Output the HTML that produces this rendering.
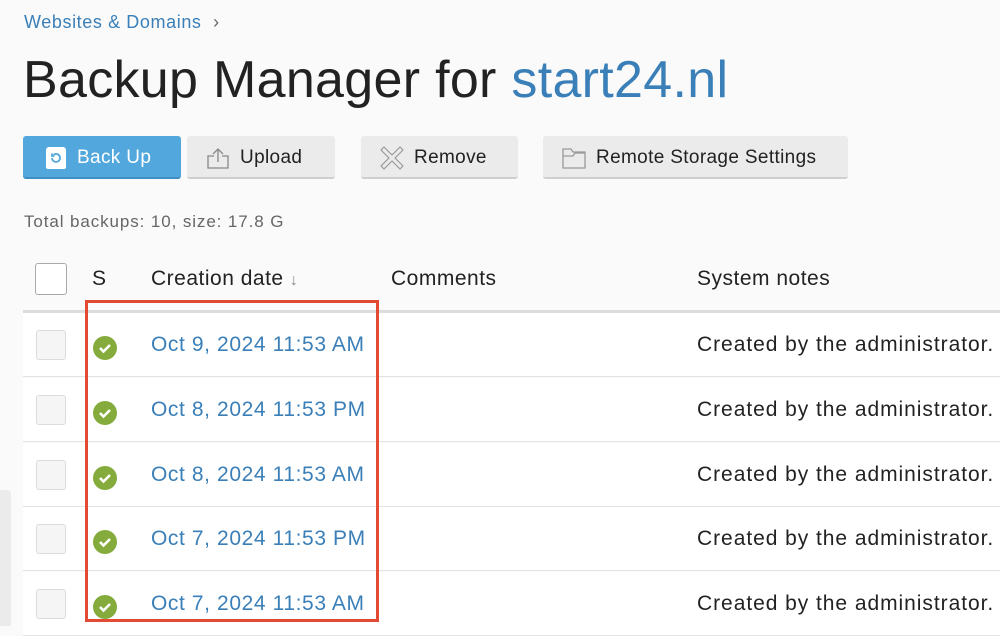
<!DOCTYPE html>
<html><head><meta charset="utf-8"><style>
*{margin:0;padding:0;box-sizing:border-box}
body{width:1000px;height:626px;overflow:hidden;background:#fafafa;font-family:"Liberation Sans",sans-serif;position:relative;color:#222}
.a{position:absolute;white-space:nowrap}
.bc{left:24px;top:12px;font-size:18px;color:#3a7fb8;letter-spacing:0.6px}
.h1{left:23px;top:50px;font-size:52px;color:#222;letter-spacing:0.3px}
.btn{position:absolute;top:136px;height:43px;background:#ebebeb;border-radius:3px;border-bottom:2px solid #cfcfcf;font-size:19px;color:#222;display:flex;align-items:center;padding-top:2px;letter-spacing:0.35px}
.btn svg{margin-right:10px}
.tot{left:24px;top:212px;font-size:17px;color:#666;letter-spacing:0.9px}
.th{top:267px;font-size:21px;color:#222;letter-spacing:0.5px}
.row{position:absolute;left:23px;width:977px;height:64px;background:#fff;border-bottom:1px solid #e3e3e3}
.cb{position:absolute;left:13px;top:17px;width:30px;height:30px;border:1px solid #dcdcdc;border-radius:3px;background:#f5f5f5}
.ok{position:absolute;left:70px;top:23px;width:24px;height:24px;border-radius:50%;background:#84ab3c}
.dt{position:absolute;left:128px;top:20px;font-size:21px;color:#3a7fb8;letter-spacing:0.6px;white-space:nowrap}
.sn{position:absolute;left:674px;top:20px;font-size:21px;color:#222;white-space:nowrap;letter-spacing:0.95px}
</style></head><body>
<div class="a bc">Websites &amp; Domains <span style="color:#666;margin-left:6px">&#8250;</span></div>
<div class="a h1">Backup Manager for <span style="color:#3a7fb8">start24.nl</span></div>

<div class="btn" style="left:23px;width:158px;background:#52a7dc;border-bottom-color:#3f8fc2;color:#fff;padding-left:22px">
<svg width="22" height="24" viewBox="0 0 22 24"><path d="M4 1h14a3 3 0 0 1 3 3v17a2 2 0 0 1-2 2H3a2 2 0 0 1-2-2V4a3 3 0 0 1 3-3z" fill="#fff"/><path d="M7 12a4 4 0 1 0 1.5-3.2M7 7.5v2.5h2.5" stroke="#52a7dc" stroke-width="1.8" fill="none"/></svg>Back Up</div>
<div class="btn" style="left:187px;width:148px;padding-left:19px">
<svg width="24" height="24" viewBox="0 0 24 24" fill="none" stroke="#888" stroke-width="1.3"><path d="M8 10H2v12h20V10h-6"/><path d="M12 16V3M7 8l5-5 5 5"/></svg>Upload</div>
<div class="btn" style="left:361px;width:157px;padding-left:19px">
<svg width="24" height="24" viewBox="0 0 24 24" fill="none" stroke="#999" stroke-width="1.2" stroke-linejoin="round"><path d="M4 1L12 9L20 1L23 4L15 12L23 20L20 23L12 15L4 23L1 20L9 12L1 4Z"/></svg>Remove</div>
<div class="btn" style="left:543px;width:305px;padding-left:19px">
<svg width="24" height="22" viewBox="0 0 24 22" fill="none" stroke="#999" stroke-width="1.3"><path d="M1 2h8l2 3h12v16H1z M1 9h10l2-3h10"/></svg>Remote Storage Settings</div>

<div class="a tot">Total backups: 10, size: 17.8 G</div>

<div class="a" style="left:35px;top:263px;width:32px;height:32px;border:1px solid #aaa;border-radius:3px;background:#fff"></div>
<div class="a th" style="left:92px">S</div>
<div class="a th" style="left:151px">Creation date <span style="color:#888;font-size:16px">&#8595;</span></div>
<div class="a th" style="left:391px">Comments</div>
<div class="a th" style="left:697px">System notes</div>
<div class="a" style="left:23px;top:310px;width:977px;height:3px;background:#dcdcdc"></div>

<div class="row" style="top:313px"><div class="cb"></div><div class="ok"></div><svg class="a" style="left:74px;top:28px" width="16" height="14"><path d="M3 7l3.5 3.5L13 4" stroke="#fff" stroke-width="2.6" fill="none"/></svg><div class="dt">Oct 9, 2024 11:53 AM</div><div class="sn">Created by the administrator.</div></div>
<div class="row" style="top:378px"><div class="cb"></div><div class="ok"></div><svg class="a" style="left:74px;top:28px" width="16" height="14"><path d="M3 7l3.5 3.5L13 4" stroke="#fff" stroke-width="2.6" fill="none"/></svg><div class="dt">Oct 8, 2024 11:53 PM</div><div class="sn">Created by the administrator.</div></div>
<div class="row" style="top:443px"><div class="cb"></div><div class="ok"></div><svg class="a" style="left:74px;top:28px" width="16" height="14"><path d="M3 7l3.5 3.5L13 4" stroke="#fff" stroke-width="2.6" fill="none"/></svg><div class="dt">Oct 8, 2024 11:53 AM</div><div class="sn">Created by the administrator.</div></div>
<div class="row" style="top:507px"><div class="cb"></div><div class="ok"></div><svg class="a" style="left:74px;top:28px" width="16" height="14"><path d="M3 7l3.5 3.5L13 4" stroke="#fff" stroke-width="2.6" fill="none"/></svg><div class="dt">Oct 7, 2024 11:53 PM</div><div class="sn">Created by the administrator.</div></div>
<div class="row" style="top:572px"><div class="cb"></div><div class="ok"></div><svg class="a" style="left:74px;top:28px" width="16" height="14"><path d="M3 7l3.5 3.5L13 4" stroke="#fff" stroke-width="2.6" fill="none"/></svg><div class="dt">Oct 7, 2024 11:53 AM</div><div class="sn">Created by the administrator.</div></div>

<div class="a" style="left:0;top:490px;width:11px;height:136px;background:#ebebeb;border-radius:0 4px 0 0"></div>
<div class="a" style="left:85px;top:300px;width:294px;height:322px;border:3px solid #e34a33"></div>
</body></html>
